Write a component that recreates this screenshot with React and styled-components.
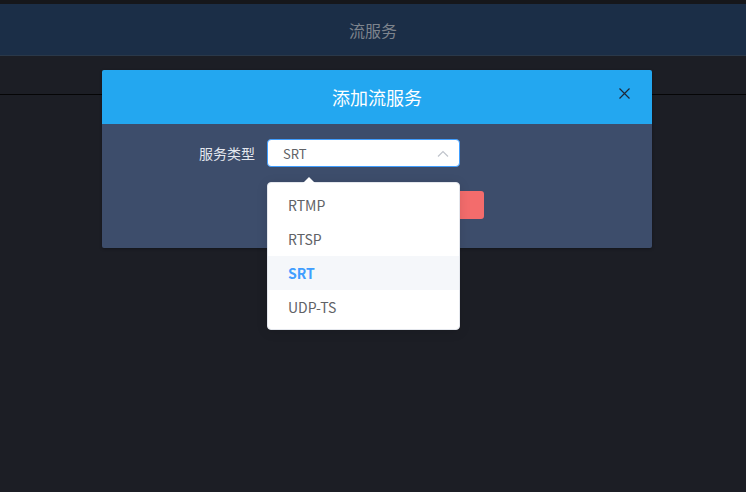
import React from 'react';
import styled, { createGlobalStyle } from 'styled-components';

const GlobalStyle = createGlobalStyle`
  html, body {
    margin: 0;
    padding: 0;
    background: #1c1e25;
    font-family: "Noto Sans CJK SC", "Noto Sans", sans-serif;
  }
`;

const options = ['RTMP', 'RTSP', 'SRT', 'UDP-TS'];

const App = () => {
  return (
    <Page>
      <GlobalStyle />
      <TopStrip />
      <Header>流服务</Header>
      <SubBar />
      <Main />
      <Dialog>
        <DialogHeader>
          <DialogTitle>添加流服务</DialogTitle>
          <Close type='button'>
            <svg width='11' height='11' viewBox='0 0 11 11'>
              <path d='M0.5 0.5L10.5 10.5M10.5 0.5L0.5 10.5' stroke='#1d2838' strokeWidth='1.2' />
            </svg>
          </Close>
        </DialogHeader>
        <DialogBody>
          <FormRow>
            <Label>服务类型</Label>
            <Select>
              <span>SRT</span>
              <svg width='12' height='7' viewBox='0 0 12 7'>
                <path d='M1 6.5L6 1.5L11 6.5' stroke='#c0c4cc' strokeWidth='1.2' fill='none' />
              </svg>
            </Select>
          </FormRow>
          <Buttons>
            <Confirm type='button'>确定</Confirm>
          </Buttons>
        </DialogBody>
      </Dialog>
      <Dropdown>
        <Caret />
        {options.map((o) => (
          <Option key={o} $active={o === 'SRT'}>{o}</Option>
        ))}
      </Dropdown>
    </Page>
  );
};

export default App;

const Page = styled.div`
  position: relative;
  width: 746px;
  height: 492px;
  overflow: hidden;
  display: flex;
  flex-direction: column;
  background: #1c1e25;
`;

const TopStrip = styled.div`
  height: 4px;
  background: #16171b;
`;

const Header = styled.div`
  height: 51px;
  display: flex;
  align-items: center;
  justify-content: center;
  background: #1b2e47;
  border-bottom: 1px solid #2a3849;
  color: #7e848d;
  font-size: 16px;
`;

const SubBar = styled.div`
  height: 38px;
  border-bottom: 1px solid #050506;
  background: #1c1e25;
`;

const Main = styled.div`
  flex: 1;
  background: #1c1e25;
`;

const Dialog = styled.div`
  position: absolute;
  left: 102px;
  top: 70px;
  width: 550px;
  border-radius: 2px;
  overflow: hidden;
  box-shadow: 0 1px 3px rgba(0, 0, 0, 0.3);
`;

const DialogHeader = styled.div`
  position: relative;
  height: 54px;
  display: flex;
  align-items: center;
  justify-content: center;
  background: #23a7f0;
`;

const DialogTitle = styled.span`
  color: #ffffff;
  font-size: 18px;
`;

const Close = styled.button`
  position: absolute;
  right: 22px;
  top: 18px;
  border: none;
  background: none;
  padding: 0;
  display: flex;
  cursor: pointer;
`;

const DialogBody = styled.div`
  background: #3d4d6b;
  height: 124px;
  padding-top: 15px;
  box-sizing: border-box;
`;

const FormRow = styled.div`
  display: flex;
  align-items: center;
  padding-left: 97px;
  gap: 12px;
`;

const Label = styled.label`
  color: #e4e7ee;
  font-size: 14px;
  line-height: 28px;
`;

const Select = styled.div`
  width: 193px;
  height: 28px;
  box-sizing: border-box;
  background: #fff;
  border: 1px solid #409eff;
  border-radius: 4px;
  display: flex;
  align-items: center;
  justify-content: space-between;
  padding: 0 10px 0 15px;
  font-size: 13px;
  color: #606266;
`;

const Buttons = styled.div`
  display: flex;
  justify-content: flex-end;
  padding-right: 168px;
  margin-top: 24px;
`;

const Confirm = styled.button`
  width: 80px;
  height: 28px;
  border: none;
  border-radius: 3px;
  background: #f36c6c;
  color: #fff;
  font-size: 13px;
`;

const Dropdown = styled.div`
  position: absolute;
  left: 267px;
  top: 182px;
  width: 193px;
  box-sizing: border-box;
  padding: 5px 0;
  background: #fff;
  border: 1px solid #e4e7ed;
  border-radius: 4px;
  box-shadow: 0 2px 12px rgba(0, 0, 0, 0.1);
`;

const Caret = styled.div`
  position: absolute;
  left: 35px;
  top: -6px;
  width: 0;
  height: 0;
  border-left: 6px solid transparent;
  border-right: 6px solid transparent;
  border-bottom: 6px solid #fff;
`;

const Option = styled.div`
  height: 34px;
  line-height: 34px;
  padding-left: 20px;
  font-size: 14px;
  color: ${(p) => (p.$active ? '#409eff' : '#606266')};
  font-weight: ${(p) => (p.$active ? 700 : 400)};
  background: ${(p) => (p.$active ? '#f5f7fa' : '#fff')};
`;
